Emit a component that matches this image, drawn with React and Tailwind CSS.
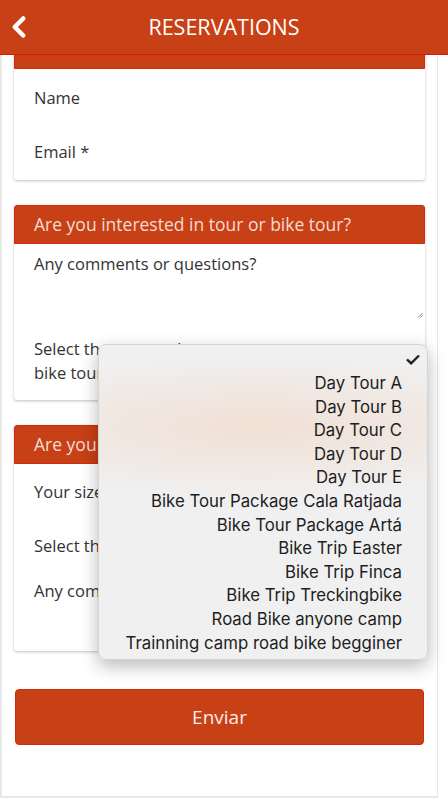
import { ChevronLeft } from 'lucide-react';

const font = { fontFamily: '"Open Sans", "Noto Sans", sans-serif' };

const options = [
  'Day Tour A',
  'Day Tour B',
  'Day Tour C',
  'Day Tour D',
  'Day Tour E',
  'Bike Tour Package Cala Ratjada',
  'Bike Tour Package Artá',
  'Bike Trip Easter',
  'Bike Trip Finca',
  'Bike Trip Treckingbike',
  'Road Bike anyone camp',
  'Trainning camp road bike begginer',
];

function Grip() {
  return (
    <svg width="6" height="6" viewBox="0 0 6 6" className="absolute right-[2px] bottom-[4px]">
      <path d="M5.5 1 L1 5.5 M5.5 3.5 L3.5 5.5" stroke="#777" strokeWidth="0.9" />
    </svg>
  );
}

function CardHead({ children }) {
  return (
    <div className="h-[39px] bg-[#c84016] border border-[#d22a0c] rounded-t-[3px] px-[19px] flex items-center text-[17.5px] text-[#f4dcd3]">
      {children}
    </div>
  );
}

export default function App() {
  return (
    <div className="relative w-[448px] h-[800px] overflow-hidden bg-white text-[#333]" style={font}>
      <header className="relative z-10 h-[55px] bg-[#c84016] border-b border-[#e0140a] flex items-center justify-center">
        <ChevronLeft className="absolute left-[2px] top-[10px] w-[34px] h-[34px] text-white" strokeWidth={3.2} />
        <h1 className="text-[21.5px] text-white">RESERVATIONS</h1>
      </header>

      <div className="w-[438px] h-[743px] border-l-2 border-r border-b-2 border-[#e8e8e8] overflow-hidden">
        <div className="-mt-[25px] px-[12px] flex flex-col">
          {/* card 1, scrolled under the header */}
          <div className="bg-white rounded-[3px] shadow-[0_1px_3px_rgba(0,0,0,0.25)]">
            <CardHead />
            <div className="px-[20px] text-[16.5px]">
              <div className="h-[56px] pt-[2px] flex items-center">Name</div>
              <div className="h-[55px] flex items-center">Email *</div>
            </div>
          </div>

          {/* card 2 */}
          <div className="mt-[25px] bg-white rounded-[3px] shadow-[0_1px_3px_rgba(0,0,0,0.25)]">
            <CardHead>Are you interested in tour or bike tour?</CardHead>
            <div className="text-[16.5px]">
              <div className="relative h-[78px] px-[20px] pt-[8px]">
                Any comments or questions?
                <Grip />
              </div>
              <div className="h-[78px] px-[20px] flex flex-col justify-center leading-[24px]">
                <span>Select the tour or the</span>
                <span>bike tour</span>
              </div>
            </div>
          </div>

          {/* card 3 */}
          <div className="mt-[25px] bg-white rounded-[3px] shadow-[0_1px_3px_rgba(0,0,0,0.25)]">
            <CardHead>Are you interested in renting a bike?</CardHead>
            <div className="text-[16.5px]">
              <div className="h-[55px] pt-[2px] px-[20px] flex items-center">Your size</div>
              <div className="h-[55px] px-[20px] flex items-center">Select the bike</div>
              <div className="relative h-[77px] px-[20px] pt-[5px]">
                Any comments or questions?
                <Grip />
              </div>
            </div>
          </div>

          <button className="mt-[38px] mx-[1px] h-[56px] rounded-[4px] bg-[#c84016] border border-[#d22a0c] text-[19px] text-[#fbeee9]">
            Enviar
          </button>
        </div>
      </div>

      {/* native select popup */}
      <div
        className="absolute left-[98px] top-[344px] w-[330px] h-[316px] rounded-[8px] border border-[#d4d4d4] bg-[radial-gradient(ellipse_95%_22%_at_48%_26%,#f1e0d5_0%,#f0e9e4_60%,#f0f0f0_100%)] shadow-[0_6px_18px_rgba(0,0,0,0.28)] pt-[3px] pr-[25px] flex flex-col items-end text-[16.8px] leading-[23.6px] text-[#1e1e1e]"
        style={{ fontFamily: 'Inter, "Liberation Sans", sans-serif' }}
      >
        <span className="h-[24px] -mr-[19px] text-[19px] leading-[24px] font-semibold">✓</span>
        {options.map((o) => (
          <span key={o}>{o}</span>
        ))}
      </div>
    </div>
  );
}
